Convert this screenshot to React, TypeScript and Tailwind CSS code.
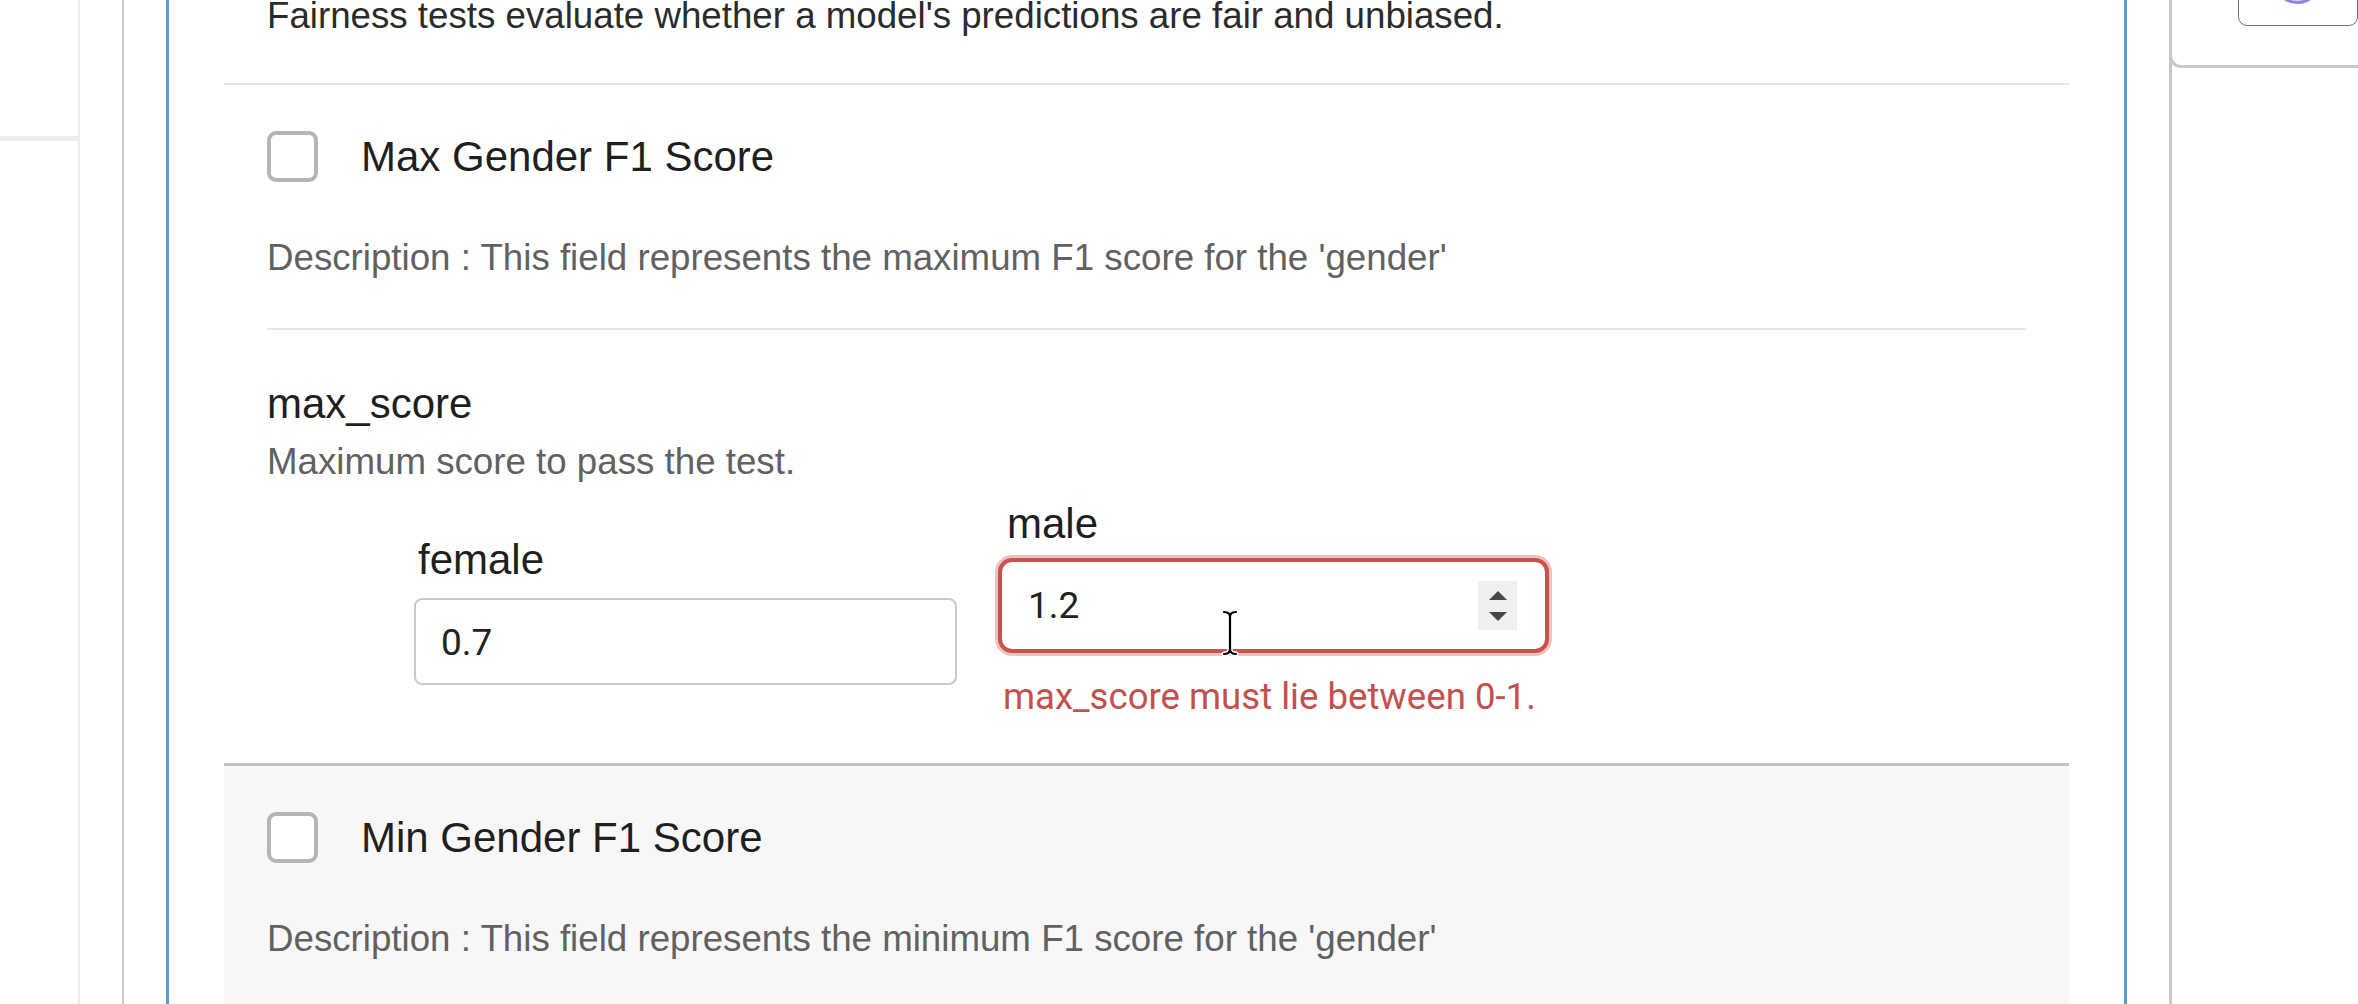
import React from "react";

function Checkbox() {
  return (
    <div className="w-[51px] h-[51px] shrink-0 rounded-[9px] border-[4px] border-[#b5b5b5] bg-white" />
  );
}

function Spinner() {
  return (
    <div className="w-[39px] h-[49px] bg-[#efefef] flex flex-col items-center justify-center gap-[12px]">
      <svg width="18" height="9" viewBox="0 0 18 9">
        <path d="M9 0 L18 9 L0 9 Z" fill="#474747" />
      </svg>
      <svg width="18" height="9" viewBox="0 0 18 9">
        <path d="M0 0 L18 0 L9 9 Z" fill="#474747" />
      </svg>
    </div>
  );
}

function IBeam() {
  return (
    <svg
      className="absolute left-[1221px] top-[608px]"
      width="18"
      height="50"
      viewBox="0 0 18 50"
    >
      <g fill="none" strokeLinecap="round">
        <path
          d="M3 4 Q9 4 9 9 Q9 4 15 4 M9 9 L9 41 M3 46 Q9 46 9 41 Q9 46 15 46"
          stroke="#ffffff"
          strokeWidth="5"
        />
        <path
          d="M3 4 Q9 4 9 9 Q9 4 15 4 M9 9 L9 41 M3 46 Q9 46 9 41 Q9 46 15 46"
          stroke="#000000"
          strokeWidth="2.2"
        />
      </g>
    </svg>
  );
}

export default function App() {
  return (
    <div className="relative w-[2358px] h-[1004px] overflow-hidden bg-white flex font-['Liberation_Sans',Arial,sans-serif]">
      {/* left sidebar */}
      <div className="w-[80px] shrink-0 border-r-2 border-[#ececec] flex flex-col">
        <div className="h-[136px]" />
        <div className="h-[5px] bg-[#ececec]" />
      </div>

      {/* main panel */}
      <div className="flex-1 ml-[42px] border-l-2 border-[#c8c8c8] pl-[42px] pr-[42px] flex">
        <div className="flex-1 border-l-[3px] border-r-[3px] border-[#5b9bd5] px-[55px]">
          <p className="mt-[-6px] pl-[43px] pb-[45px] text-[36.7px] leading-[44px] text-[#2b2b2b]">
            Fairness tests evaluate whether a model's predictions are fair and unbiased.
          </p>

          {/* Section 1 */}
          <div className="border-t-2 border-[#e6e6e6] px-[43px] pt-[46px] pb-[44px]">
            <div className="flex items-center gap-[43px] h-[51px]">
              <Checkbox />
              <span className="text-[42px] leading-[51px] text-[#1f1f1f]">Max Gender F1 Score</span>
            </div>
            <p className="mt-[54px] text-[36.7px] leading-[44px] text-[#616161]">
              Description : This field represents the maximum F1 score for the 'gender'
            </p>
            <div className="mt-[48px] h-[2px] bg-[#e6e6e6]" />
            <p className="mt-[50px] text-[42px] leading-[48px] text-[#1f1f1f]">max_score</p>
            <p className="mt-[12px] text-[36.7px] leading-[44px] text-[#616161]">
              Maximum score to pass the test.
            </p>
            <div className="mt-[16px] pl-[147px] flex items-start gap-[41px]">
              {/* female */}
              <div className="mt-[36px] w-[543px] flex flex-col">
                <span className="pl-[4px] text-[42px] leading-[48px] text-[#1f1f1f]">female</span>
                <div className="mt-[14px] h-[87px] rounded-[8px] border-2 border-[#c9c9c9] bg-white flex items-center pl-[25px] pt-[3px] font-['Roboto',sans-serif] text-[37px] text-[#222]">
                  0.7
                </div>
              </div>
              {/* male */}
              <div className="w-[551px] flex flex-col">
                <span className="pl-[9px] text-[42px] leading-[48px] text-[#1f1f1f]">male</span>
                <div className="mt-[10px] h-[95px] rounded-[14px] border-[4px] border-[#c9524e] shadow-[0_0_0_3px_rgba(201,82,78,0.35)] bg-white flex items-center justify-between pl-[26px] pr-[28px] font-['Roboto',sans-serif] text-[37px] text-[#222]">
                  <span>1.2</span>
                  <Spinner />
                </div>
                <span className="mt-[22px] pl-[5px] font-['Roboto',sans-serif] text-[36.6px] leading-[44px] text-[#c4504b]">
                  max_score must lie between 0-1.
                </span>
              </div>
            </div>
          </div>

          {/* Section 2 */}
          <div className="border-t-[3px] border-[#c2c2c2] bg-[#f7f7f7] px-[43px] pt-[46px] pb-[80px]">
            <div className="flex items-center gap-[43px] h-[51px]">
              <Checkbox />
              <span className="text-[42px] leading-[51px] text-[#1f1f1f]">Min Gender F1 Score</span>
            </div>
            <p className="mt-[54px] text-[36.7px] leading-[44px] text-[#616161]">
              Description : This field represents the minimum F1 score for the 'gender'
            </p>
          </div>
        </div>
      </div>

      {/* right column */}
      <div className="w-[189px] shrink-0 border-l-[3px] border-[#c8c8c8] flex flex-col">
        <div className="ml-[-3px] h-[68px] border-l-[3px] border-b-[3px] rounded-bl-[12px] border-[#c8c8c8] pl-[66px]">
          <div className="mt-[-32px] h-[58px] rounded-[9px] border-[1.5px] border-[#707070] pl-[34px]">
            <div className="mt-[-14px] w-[49px] h-[49px] rounded-full border-[3px] border-[#8d80f2] bg-[#d9d8e2]" />
          </div>
        </div>
        <div className="flex-1" />
      </div>

      <IBeam />
    </div>
  );
}
